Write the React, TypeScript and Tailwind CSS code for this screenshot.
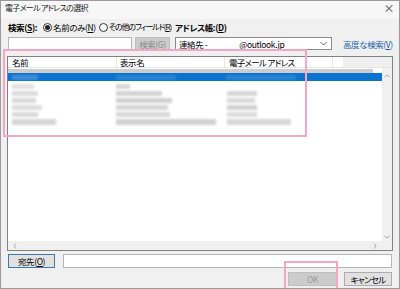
import React from "react";

const font = "font-['Noto_Sans_CJK_JP','Noto_Sans',sans-serif] [font-feature-settings:'palt'] tracking-[-0.4px] whitespace-nowrap";

function Radio({ checked }: { checked?: boolean }) {
  return (
    <span className="w-[9px] h-[9px] shrink-0 rounded-full border border-[#333] bg-white flex items-center justify-center">
      {checked && <span className="w-[5px] h-[5px] rounded-full bg-[#222]" />}
    </span>
  );
}

type Blk = { x: number; w: number; c?: string };
const rows: { h: number; blocks: Blk[] }[] = [
  { h: 7, blocks: [{ x: 4, w: 22, c: "#e2e2e2" }, { x: 108, w: 14, c: "#d8d8d8" }] },
  { h: 7, blocks: [{ x: 4, w: 26, c: "#dcdcdc" }, { x: 108, w: 46, c: "#d4d4d4" }, { x: 219, w: 30, c: "#d6d6d6" }] },
  { h: 7, blocks: [{ x: 4, w: 24, c: "#d9d9d9" }, { x: 108, w: 56, c: "#d0d0d0" }, { x: 219, w: 28, c: "#dadada" }] },
  { h: 7, blocks: [{ x: 4, w: 30, c: "#dddddd" }, { x: 108, w: 52, c: "#d6d6d6" }, { x: 219, w: 30, c: "#d2d2d2" }] },
  { h: 7, blocks: [{ x: 4, w: 26, c: "#dadada" }, { x: 108, w: 54, c: "#d8d8d8" }, { x: 219, w: 30, c: "#dcdcdc" }] },
  { h: 8, blocks: [{ x: 4, w: 44, c: "#d6d6d6" }, { x: 108, w: 100, c: "#d2d2d2" }, { x: 219, w: 64, c: "#d8d8d8" }] },
];

export default function App() {
  return (
    <div className={`relative w-[400px] h-[289px] bg-[#f0f0f0] border border-[#9a9a9a] text-[8.5px] leading-[10px] text-black ${font} flex flex-col overflow-hidden`}>
      {/* title bar */}
      <div className="h-[18px] bg-[#f7f7f7] flex items-start justify-between pl-[4px] pr-[5px] pt-[2px]">
        <span className="text-[#222] text-[8px] tracking-[-0.7px]">電子メール アドレスの選択</span>
        <span className="text-[11px] leading-[10px] text-[#444]">×</span>
      </div>

      {/* row 1 */}
      <div className="mt-[3px] h-[10px] flex items-center pl-[7px]">
        <div className="w-[167px] shrink-0 flex items-center">
          <span className="font-bold">検索(<u>S</u>):</span>
          <span className="ml-[6px] flex items-center gap-[1px]">
            <Radio checked />
            <span>名前のみ(<u>N</u>)</span>
          </span>
          <span className="ml-[3px] flex items-center gap-[1px]">
            <Radio />
            <span className="text-[8px] tracking-[-1.1px]">その他のフィールド(<u>R</u>)</span>
          </span>
        </div>
        <span className="font-bold">アドレス帳:(<u>D</u>)</span>
      </div>

      {/* row 2 */}
      <div className="mt-[5px] h-[13px] flex items-stretch pl-[7px]">
        <div className="w-[124px] shrink-0 bg-white border border-[#b5b5b5]" />
        <div className="ml-[3px] w-[35px] shrink-0 bg-[#cccccc] border border-[#bfbfbf] text-[#8a8a8a] flex items-center justify-center">
          検索(<u>G</u>)
        </div>
        <div className="ml-[5px] w-[157px] shrink-0 bg-white border border-[#8a8a8a] flex items-center pl-[3px] pr-[4px]">
          <span>連絡先 -</span>
          <span className="ml-[32px]">@outlook.jp</span>
          <span className="ml-auto">
            <svg width="7" height="5" viewBox="0 0 7 5"><path d="M0.5 1 L3.5 4 L6.5 1" fill="none" stroke="#555" strokeWidth="0.9" /></svg>
          </span>
        </div>
        <span className="ml-[11px] self-center text-[#1a5ea8]">高度な検索(<u>V</u>)</span>
      </div>

      {/* list */}
      <div className="mt-[6px] mx-[6px] h-[195px] border border-[#828282] bg-white flex flex-col">
        {/* header */}
        <div className="h-[11px] flex border-b border-[#e5e5e5]">
          <div className="w-[109px] shrink-0 border-r border-[#e5e5e5] pl-[4px] flex items-center">名前</div>
          <div className="w-[108px] shrink-0 border-r border-[#e5e5e5] pl-[3px] flex items-center">表示名</div>
          <div className="w-[108px] shrink-0 border-r border-[#e5e5e5] pl-[4px] flex items-center tracking-[-0.7px]">電子メール アドレス</div>
          <div className="w-[10px] shrink-0" />
          <div className="flex-1 bg-[#f0f0f0]" />
        </div>
        <div className="flex flex-1 min-h-0">
          <div className="flex-1 flex flex-col">
            <div className="mt-[1px] h-[4px] w-[365px] bg-[#cdcdcd]" />
            <div className="h-[8px] bg-[#0a74d0] flex items-center">
              <div className="ml-[4px] w-[26px] h-[5px] bg-[#3d8ed6] blur-[1px]" />
              <div className="ml-[78px] w-[60px] h-[5px] bg-[#2a84d3] blur-[1px]" />
              <div className="ml-[50px] w-[70px] h-[5px] bg-[#2a84d3] blur-[1px]" />
            </div>
            <div className="mt-[2px] flex flex-col">
              {rows.map((r, i) => (
                <div key={i} className="relative" style={{ height: r.h }}>
                  {r.blocks.map((b, j) => (
                    <div
                      key={j}
                      className="absolute top-[1px] bottom-[1px] blur-[0.8px]"
                      style={{ left: b.x, width: b.w, background: b.c }}
                    />
                  ))}
                </div>
              ))}
            </div>
            <div className="flex-1" />
            {/* horizontal scrollbar */}
            <div className="h-[9px] bg-[#f0f0f0] flex items-center justify-between px-[5px]">
              <svg width="4" height="6" viewBox="0 0 4 6"><path d="M3 0.5 L1 3 L3 5.5" fill="none" stroke="#a0a0a0" strokeWidth="0.9" /></svg>
              <svg width="4" height="6" viewBox="0 0 4 6"><path d="M1 0.5 L3 3 L1 5.5" fill="none" stroke="#a0a0a0" strokeWidth="0.9" /></svg>
            </div>
          </div>
          {/* vertical scrollbar */}
          <div className="w-[10px] bg-[#f0f0f0] flex flex-col items-center justify-between pt-[6px]">
            <svg width="6" height="4" viewBox="0 0 6 4"><path d="M0.5 3 L3 1 L5.5 3" fill="none" stroke="#a0a0a0" strokeWidth="0.9" /></svg>
            <div className="flex flex-col items-center">
              <svg width="6" height="4" viewBox="0 0 6 4"><path d="M0.5 1 L3 3 L5.5 1" fill="none" stroke="#a0a0a0" strokeWidth="0.9" /></svg>
              <div className="h-[11px]" />
            </div>
          </div>
        </div>
      </div>

      {/* row to */}
      <div className="mt-[3px] h-[14px] flex pl-[7px] pr-[7px]">
        <div className="w-[47px] shrink-0 bg-[#e1e1e1] border border-[#3f78ad] flex items-center justify-center">
          宛先(<u>O</u>)
        </div>
        <div className="ml-[8px] flex-1 bg-white border border-[#b5b5b5]" />
      </div>

      {/* buttons */}
      <div className="mt-[4px] h-[14px] flex justify-end pr-[7px]">
        <div className="w-[49px] bg-[#cccccc] border border-[#bfbfbf] text-[#9a9a9a] flex items-center justify-center">OK</div>
        <div className="ml-[7px] w-[48px] bg-[#e1e1e1] border border-[#adadad] flex items-center justify-center tracking-[-0.7px]">キャンセル</div>
      </div>

      {/* highlight overlays */}
      <div className="absolute left-[2px] top-[48px] w-[304px] h-[88px] border-2 border-[#f3a7c4] pointer-events-none" />
      <div className="absolute left-[283px] top-[260px] w-[54px] h-[30px] border-2 border-[#f3a7c4] pointer-events-none" />
    </div>
  );
}
